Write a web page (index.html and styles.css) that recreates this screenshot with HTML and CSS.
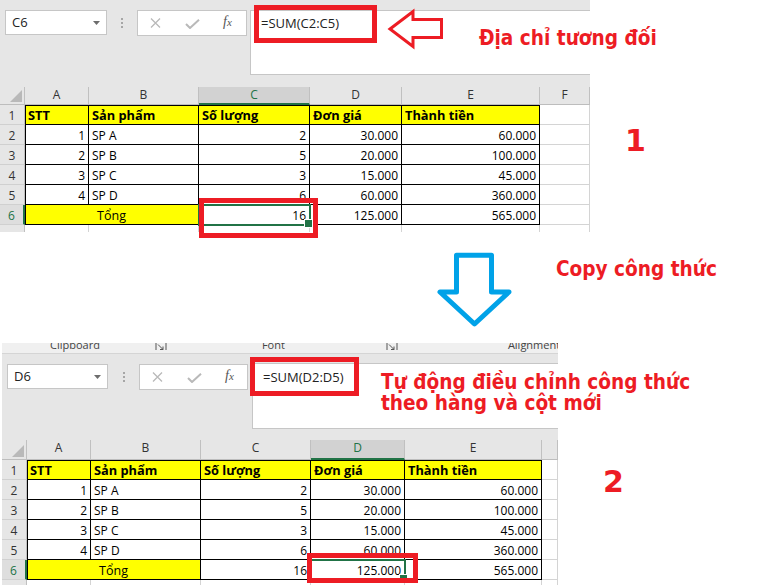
FILE: index.html
```html
<!DOCTYPE html>
<html lang="vi">
<head>
<meta charset="utf-8">
<title>Địa chỉ tương đối</title>
<link rel="stylesheet" href="styles.css">
</head>
<body>
<div class="page">

  <section class="row row-top">
    <div class="xl xl-top">
      <div class="fbar fbar-top">
        <div class="namebox nb-top"><span>C6</span><svg class="caret" width="7" height="4" viewBox="0 0 7 4"><path d="M0 0H7L3.5 4Z" fill="#6d6d6d"/></svg></div>
        <div class="grip grip-top"><i></i><i></i><i></i></div>
        <div class="btns btns-top">
          <svg class="ic-x" width="11" height="10" viewBox="0 0 11 10"><path d="M1 0.5L10 9.5M10 0.5L1 9.5" stroke="#b9b9b9" stroke-width="1.3" fill="none"/></svg>
          <svg class="ic-ok" width="15" height="10" viewBox="0 0 15 10"><path d="M1 5L5 9L14 0.8" stroke="#b9b9b9" stroke-width="2" fill="none"/></svg>
          <span class="fx">f<small>x</small></span>
        </div>
        <div class="formula f-top">=SUM(C2:C5)</div>
      </div>

      <div class="sheet sheet-top">
        <div class="corner"><svg width="12" height="12" viewBox="0 0 12 12"><path d="M12 0V12H0Z" fill="#b9b9b9"/></svg></div>
        <div class="ch">A</div><div class="ch">B</div><div class="ch sel">C</div><div class="ch">D</div><div class="ch">E</div><div class="ch">F</div>

        <div class="rh">1</div>
        <div class="cell t y b top lft">STT</div><div class="cell t y b top">Sản phẩm</div><div class="cell t y b top">Số lượng</div><div class="cell t y b top">Đơn giá</div><div class="cell t y b top">Thành tiền</div><div class="cell"></div>

        <div class="rh">2</div>
        <div class="cell t n lft">1</div><div class="cell t">SP A</div><div class="cell t n">2</div><div class="cell t n">30.000</div><div class="cell t n">60.000</div><div class="cell"></div>

        <div class="rh">3</div>
        <div class="cell t n lft">2</div><div class="cell t">SP B</div><div class="cell t n">5</div><div class="cell t n">20.000</div><div class="cell t n">100.000</div><div class="cell"></div>

        <div class="rh">4</div>
        <div class="cell t n lft">3</div><div class="cell t">SP C</div><div class="cell t n">3</div><div class="cell t n">15.000</div><div class="cell t n">45.000</div><div class="cell"></div>

        <div class="rh">5</div>
        <div class="cell t n lft">4</div><div class="cell t">SP D</div><div class="cell t n">6</div><div class="cell t n">60.000</div><div class="cell t n">360.000</div><div class="cell"></div>

        <div class="rh sel">6</div>
        <div class="cell t y ctr lft span2">Tổng</div><div class="cell t n selcell">16</div><div class="cell t n">125.000</div><div class="cell t n">565.000</div><div class="cell"></div>

        <div class="rh part"></div>
        <div class="cell part"></div><div class="cell part"></div><div class="cell part"></div><div class="cell part"></div><div class="cell part"></div><div class="cell part"></div>
      </div>
    </div>
    <div class="big big-1">1</div>
  </section>

  <section class="mid">
    <svg class="down" width="80" height="80" viewBox="0 0 80 80"><path d="M21.5 5.2H56.5V42H74L39.5 74L5 42H21.5Z" fill="none" stroke="#00a2e8" stroke-width="5" stroke-linejoin="round"/></svg>
    <div class="lbl lbl-copy">Copy công thức</div>
  </section>

  <section class="row row-bot">
    <div class="xl xl-bot">
      <div class="strip">
        <span class="grp g-clip">Clipboard</span>
        <svg class="launch l-1" width="12" height="8" viewBox="0 0 12 8"><path d="M1 0V7M3 1.5L8 6.5M8 3.5V6.5H5M11 0V7" stroke="#555" stroke-width="1" fill="none"/></svg>
        <span class="grp g-font">Font</span>
        <svg class="launch l-2" width="12" height="8" viewBox="0 0 12 8"><path d="M1 0V7M3 1.5L8 6.5M8 3.5V6.5H5M11 0V7" stroke="#555" stroke-width="1" fill="none"/></svg>
        <span class="grp g-align">Alignment</span>
      </div>
      <div class="fbar fbar-bot">
        <div class="namebox nb-bot"><span>D6</span><svg class="caret" width="7" height="4" viewBox="0 0 7 4"><path d="M0 0H7L3.5 4Z" fill="#6d6d6d"/></svg></div>
        <div class="grip grip-bot"><i></i><i></i><i></i></div>
        <div class="btns btns-bot">
          <svg class="ic-x" width="11" height="10" viewBox="0 0 11 10"><path d="M1 0.5L10 9.5M10 0.5L1 9.5" stroke="#b9b9b9" stroke-width="1.3" fill="none"/></svg>
          <svg class="ic-ok" width="15" height="10" viewBox="0 0 15 10"><path d="M1 5L5 9L14 0.8" stroke="#b9b9b9" stroke-width="2" fill="none"/></svg>
          <span class="fx">f<small>x</small></span>
        </div>
        <div class="formula f-bot">=SUM(D2:D5)</div>
      </div>

      <div class="sheet sheet-bot">
        <div class="corner"><svg width="12" height="12" viewBox="0 0 12 12"><path d="M12 0V12H0Z" fill="#b9b9b9"/></svg></div>
        <div class="ch">A</div><div class="ch">B</div><div class="ch">C</div><div class="ch sel">D</div><div class="ch">E</div><div class="ch"></div>

        <div class="rh">1</div>
        <div class="cell t y b top lft">STT</div><div class="cell t y b top">Sản phẩm</div><div class="cell t y b top">Số lượng</div><div class="cell t y b top">Đơn giá</div><div class="cell t y b top">Thành tiền</div><div class="cell"></div>

        <div class="rh">2</div>
        <div class="cell t n lft">1</div><div class="cell t">SP A</div><div class="cell t n">2</div><div class="cell t n">30.000</div><div class="cell t n">60.000</div><div class="cell"></div>

        <div class="rh">3</div>
        <div class="cell t n lft">2</div><div class="cell t">SP B</div><div class="cell t n">5</div><div class="cell t n">20.000</div><div class="cell t n">100.000</div><div class="cell"></div>

        <div class="rh">4</div>
        <div class="cell t n lft">3</div><div class="cell t">SP C</div><div class="cell t n">3</div><div class="cell t n">15.000</div><div class="cell t n">45.000</div><div class="cell"></div>

        <div class="rh">5</div>
        <div class="cell t n lft">4</div><div class="cell t">SP D</div><div class="cell t n">6</div><div class="cell t n">60.000</div><div class="cell t n">360.000</div><div class="cell"></div>

        <div class="rh sel">6</div>
        <div class="cell t y ctr lft span2">Tổng</div><div class="cell t n">16</div><div class="cell t n selcell">125.000</div><div class="cell t n">565.000</div><div class="cell"></div>

        <div class="rh part"></div>
        <div class="cell part"></div><div class="cell part"></div><div class="cell part"></div><div class="cell part"></div><div class="cell part"></div><div class="cell part"></div>
      </div>
    </div>
    <div class="big big-2">2</div>
  </section>

  <!-- annotations laid over the screenshots -->
  <div class="redbox rb-f1"></div>
  <svg class="redarrow" width="61" height="42" viewBox="0 0 61 42"><path d="M5 21L28 3.5V11.5H56.5V29.5H28V38.5Z" fill="none" stroke="#ed1c24" stroke-width="3"/></svg>
  <div class="lbl lbl-rel">Địa chỉ tương đối</div>
  <div class="redbox rb-c6"></div>

  <div class="redbox rb-f2"></div>
  <div class="lbl lbl-auto">Tự động điều chỉnh công thức<br>theo hàng và cột mới</div>
  <div class="redbox rb-d6"></div>
</div>
</body>
</html>
```

FILE: styles.css
```css
* { box-sizing: border-box; }

body {
  margin: 0;
  background: #fff;
}

.page {
  position: relative;
  width: 770px;
  height: 585px;
  overflow: hidden;
  background: #fff;
  font-family: "Open Sans", "Noto Sans", sans-serif;
  color: #000;
}

.row { display: flex; align-items: flex-start; }
.row-top { height: 232px; }
.row-bot { height: 242px; margin-left: 2px; }

.xl { background: #e6e6e6; overflow: hidden; }
.xl-top { width: 590px; height: 232px; }
.xl-bot { width: 556px; height: 242px; }

/* ribbon group labels strip */
.strip {
  height: 11px;
  background: #f0f0f0;
  border-bottom: 1px solid #d5d5d5;
  overflow: hidden;
  display: flex;
  align-items: flex-start;
  font-size: 11px;
  line-height: 11px;
  color: #444;
  white-space: nowrap;
}
.grp { display: block; margin-top: -4px; }
.g-clip { margin-left: 48px; }
.l-1 { margin-left: 55px; flex: none; }
.g-font { margin-left: 95px; }
.l-2 { margin-left: 101px; flex: none; }
.g-align { margin-left: 110px; }

/* formula bar */
.fbar { display: flex; align-items: flex-start; }
.fbar-top { padding-top: 10px; height: 75px; margin-bottom: 12px; }
.fbar-bot { padding-top: 9px; height: 75px; margin-bottom: 11px; }

.namebox {
  display: flex;
  justify-content: space-between;
  align-items: center;
  height: 25px;
  background: #fff;
  border: 1px solid #c6c6c6;
  padding: 0 6px;
  font-size: 13px;
  line-height: 23px;
  color: #222;
  flex: none;
}
.nb-top { margin-left: 5px; width: 102px; }
.nb-bot { margin-left: 5px; margin-top: 1px; width: 101px; }

.grip {
  display: flex;
  flex-direction: column;
  align-items: center;
  gap: 2px;
  padding-top: 8px;
  flex: none;
}
.grip i { display: block; width: 2px; height: 2px; background: #a6a6a6; }
.grip-top { width: 30px; }
.grip-bot { width: 31px; padding-top: 9px; }

.btns {
  display: flex;
  align-items: center;
  height: 26px;
  background: #fff;
  border: 1px solid #c6c6c6;
  padding-left: 12px;
  flex: none;
}
.btns-top { width: 110px; }
.btns-bot { width: 109px; margin-top: 1px; }
.ic-ok { margin-left: 24px; margin-top: 2px; }
.fx {
  margin-left: 23px;
  margin-top: -2px;
  font-family: "Liberation Serif", "DejaVu Serif", serif;
  font-style: italic;
  font-size: 14px;
  line-height: 14px;
  color: #555;
}
.fx small { font-size: 11px; }

.formula {
  height: 65px;
  background: #fff;
  border: 1px solid #c6c6c6;
  border-right: none;
  padding: 3px 0 0 10px;
  font-size: 13px;
  line-height: 18px;
  color: #222;
  flex: none;
  white-space: nowrap;
}
.f-top { margin-left: 3px; width: 340px; }
.f-bot { margin-left: 4px; width: 306px; height: 66px; padding-top: 4px; }

/* sheet grid */
.sheet {
  display: grid;
  background: #fff;
  font-size: 12px;
}
.sheet-top {
  grid-template-columns: 25px 64px 110px 111px 92px 138px 50px;
  grid-template-rows: 18px repeat(6, 20px) 7px;
}
.sheet-bot {
  grid-template-columns: 25px 64px 110px 110px 94px 137px 16px;
  grid-template-rows: 20px repeat(6, 20px) 5px;
}

.corner {
  background: #e6e6e6;
  border-right: 1px solid #c0c0c0;
  border-bottom: 1px solid #bdbdbd;
  display: flex;
  align-items: flex-end;
  justify-content: flex-end;
  padding: 0 2px 2px 0;
}
.ch {
  background: #e6e6e6;
  border-right: 1px solid #c0c0c0;
  border-bottom: 1px solid #bdbdbd;
  text-align: center;
  line-height: 16px;
  color: #333;
}
.ch.sel {
  background: #d2d2d2;
  color: #217346;
  border-bottom: 2px solid #217346;
}
.rh {
  background: #e6e6e6;
  border-right: 1px solid #c0c0c0;
  border-bottom: 1px solid #d0d0d0;
  text-align: center;
  padding-top: 3px;
  line-height: 15px;
  color: #333;
}
.rh.sel {
  color: #217346;
  background: #dedede;
  border-right: 2px solid #217346;
}
.rh.part { border-bottom: none; }

.cell {
  border-right: 1px solid #d4d4d4;
  border-bottom: 1px solid #d4d4d4;
  padding: 3px 3px 0;
  line-height: 15px;
  white-space: nowrap;
  overflow: hidden;
}
.cell.part { border-bottom: none; }
.t { border-right-color: #000; border-bottom-color: #000; }
.y { background: #ffff00; }
.b { font-weight: 700; font-size: 12.8px; }
.n { text-align: right; }
.ctr { text-align: center; font-size: 12.5px; }
.lft { box-shadow: inset 1px 0 0 #000; }
.top { box-shadow: inset 0 1px 0 #000; }
.lft.top { box-shadow: inset 1px 0 0 #000, inset 0 1px 0 #000; }
.span2 { grid-column: span 2; }

.selcell {
  position: relative;
  overflow: visible;
  outline: 2px solid #217346;
  outline-offset: -1px;
}
.selcell::after {
  content: "";
  position: absolute;
  right: -4px;
  bottom: -4px;
  width: 7px;
  height: 7px;
  background: #217346;
  border: 1px solid #fff;
}

/* middle */
.mid {
  height: 111px;
  display: flex;
  align-items: flex-start;
  padding-left: 435px;
}
.down { margin-top: 18px; flex: none; }
.lbl-copy { margin-left: 41px; margin-top: 27px; }

/* annotations */
.lbl {
  color: #ed1c24;
  font-family: "DejaVu Sans Condensed", "DejaVu Sans", sans-serif;
  font-stretch: semi-condensed;
  font-weight: 700;
  font-size: 20.6px;
  line-height: 21px;
  white-space: nowrap;
}
.big {
  color: #ed1c24;
  font-family: "DejaVu Sans", sans-serif;
  font-weight: 700;
  font-size: 30px;
  line-height: 30px;
}
.big-1 { margin-left: 35px; margin-top: 126px; }
.big-2 { margin-left: 45px; margin-top: 124px; }

.redbox {
  position: absolute;
  border: 5px solid #ed1c24;
}
.rb-f1 { left: 254px; top: 5px; width: 123px; height: 38px; }
.rb-c6 { left: 199px; top: 198px; width: 119px; height: 40px; }
.rb-f2 { left: 250px; top: 357px; width: 109px; height: 39px; }
.rb-d6 { left: 307px; top: 553px; width: 111px; height: 30px; }

.redarrow { position: absolute; left: 385px; top: 8px; }
.lbl-rel { position: absolute; left: 479px; top: 28px; }
.lbl-auto { position: absolute; left: 381px; top: 372px; }
```
